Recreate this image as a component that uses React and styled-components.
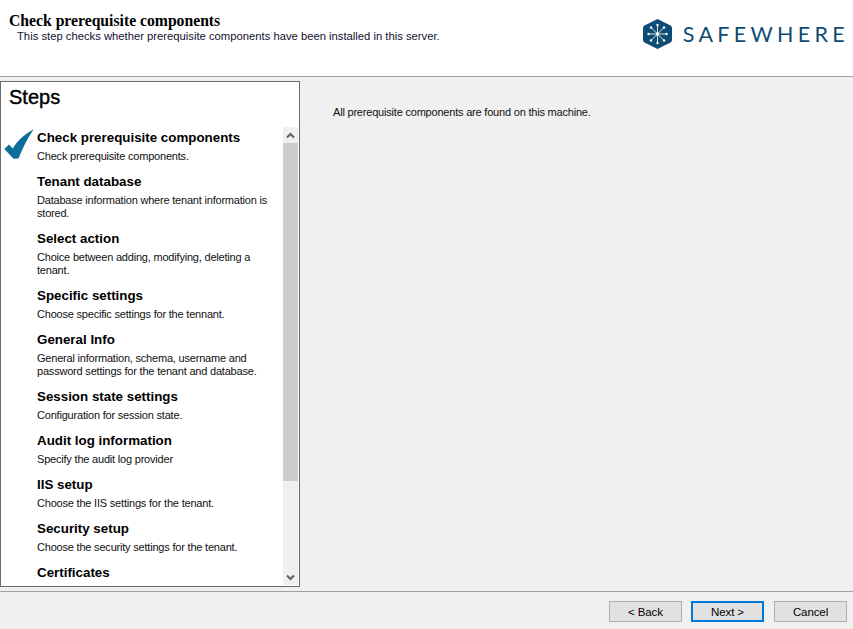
import React from 'react';
import styled, { createGlobalStyle } from 'styled-components';

const GlobalStyle = createGlobalStyle`
  html, body {
    margin: 0;
    padding: 0;
    height: 100%;
    background: #f0f0f0;
  }
  #root {
    height: 100%;
  }
`;

const STEPS = [
  { title: 'Check prerequisite components', desc: 'Check prerequisite components.', done: true },
  { title: 'Tenant database', desc: 'Database information where tenant information is stored.' },
  { title: 'Select action', desc: 'Choice between adding, modifying, deleting a tenant.' },
  { title: 'Specific settings', desc: 'Choose specific settings for the tennant.' },
  { title: 'General Info', desc: 'General information, schema, username and password settings for the tenant and database.' },
  { title: 'Session state settings', desc: 'Configuration for session state.' },
  { title: 'Audit log information', desc: 'Specify the audit log provider' },
  { title: 'IIS setup', desc: 'Choose the IIS settings for the tenant.' },
  { title: 'Security setup', desc: 'Choose the security settings for the tenant.' },
  { title: 'Certificates' },
];

const Wizard = styled.div`
  width: 853px;
  height: 629px;
  display: flex;
  flex-direction: column;
  overflow: hidden;
  background: #f0f0f0;
  font-family: 'Liberation Sans', Arial, sans-serif;
  color: #000;
`;

const Header = styled.header`
  height: 77px;
  flex: none;
  box-sizing: border-box;
  display: flex;
  justify-content: space-between;
  background: #fff;
  border-bottom: 1px solid #a0a0a0;
`;

const HeaderText = styled.div`
  padding: 12px 0 0 9px;
`;

const PageTitle = styled.h1`
  margin: 0;
  font: bold 15.7px/18px 'Liberation Serif', 'Times New Roman', serif;
`;

const PageSubtitle = styled.p`
  margin: 0;
  padding-left: 8px;
  font-size: 11.25px;
  line-height: 13px;
  color: #101030;
`;

const Logo = styled.div`
  display: flex;
  align-items: center;
  gap: 11px;
  padding: 0 8px 8px 0;
`;

const LogoText = styled.span`
  font: 400 21.5px/24px Lato, sans-serif;
  letter-spacing: 4.3px;
  color: #0e4c74;
  margin-right: -4px;
`;

const Main = styled.main`
  flex: 1;
  display: flex;
  min-height: 0;
  padding-top: 4px;
`;

const StepsPanel = styled.aside`
  width: 300px;
  height: 506px;
  flex: none;
  box-sizing: border-box;
  display: flex;
  flex-direction: column;
  background: #fff;
  border: 1px solid #696969;
`;

const StepsHeading = styled.h2`
  margin: 0;
  padding: 3px 0 0 8px;
  height: 45px;
  box-sizing: border-box;
  flex: none;
  font-size: 20px;
  line-height: 24px;
  font-weight: 400;
  -webkit-text-stroke: 0.4px #000;
`;

const StepsBody = styled.div`
  flex: 1;
  min-height: 0;
  display: flex;
`;

const StepList = styled.ol`
  flex: 1;
  min-width: 0;
  margin: 0;
  padding: 2px 0 0;
  list-style: none;
  overflow: hidden;
`;

const StepItem = styled.li`
  display: grid;
  grid-template-columns: 36px 1fr;
  padding-bottom: 10px;
`;

const CheckCell = styled.div`
  position: relative;
`;

const CheckMark = styled.svg`
  position: absolute;
  left: 3px;
  top: 0;
`;

const StepTitle = styled.div`
  height: 21px;
  font-size: 13.35px;
  line-height: 18px;
  font-weight: 700;
`;

const StepDesc = styled.div`
  width: 236px;
  font-size: 11px;
  letter-spacing: -0.2px;
  line-height: 13px;
  color: #101010;
`;

const Scrollbar = styled.div`
  width: 15px;
  flex: none;
  margin-right: 1px;
  margin-bottom: 1px;
  display: flex;
  flex-direction: column;
  background: #f0f0f0;
`;

const ScrollArrow = styled.div`
  height: 16px;
  flex: none;
  display: flex;
  align-items: center;
  justify-content: center;
`;

const ScrollTrack = styled.div`
  flex: 1;
  min-height: 0;
`;

const ScrollThumb = styled.div`
  height: 338px;
  background: #cdcdcd;
`;

const Content = styled.section`
  flex: 1;
  padding: 24px 0 0 33px;
  font-size: 11px;
  letter-spacing: -0.2px;
  line-height: 14px;
  color: #101010;
`;

const Footer = styled.footer`
  height: 38px;
  flex: none;
  box-sizing: border-box;
  display: flex;
  justify-content: flex-end;
  align-items: flex-start;
  gap: 9px;
  padding: 9px 6px 0 0;
  border-top: 1px solid #a0a0a0;
`;

const Button = styled.button`
  width: 73px;
  height: 21px;
  margin: 0 ${(props) => (props.$focused ? '1px' : '0')} 0 0;
  padding: 0;
  box-sizing: border-box;
  background: #e1e1e1;
  border: ${(props) => (props.$focused ? '2px solid #0078d7' : '1px solid #adadad')};
  font-family: 'Liberation Sans', Arial, sans-serif;
  font-size: 11.5px;
  letter-spacing: -0.1px;
  color: #000;
`;

const HexLogo = () => (
  <svg width="29" height="30" viewBox="0 0 29 30" aria-hidden="true">
    <path
      d="M14.5 0 L27.5 6.5 Q29 7.3 29 9 V21 Q29 22.7 27.5 23.5 L14.5 30 L1.5 23.5 Q0 22.7 0 21 V9 Q0 7.3 1.5 6.5 Z"
      fill="#0e4c74"
    />
    <g stroke="#d5e2ea" strokeWidth="1" strokeLinecap="round">
      <path d="M14.5 15 V6 M14.5 15 V24 M14.5 15 H23.5 M14.5 15 H5.5" />
      <path d="M14.5 15 L21 8.5 M14.5 15 L8 8.5 M14.5 15 L21 21.5 M14.5 15 L8 21.5" />
    </g>
    <g fill="#fff">
      <circle cx="14.5" cy="15" r="1.7" />
      <circle cx="14.5" cy="6" r="1.2" />
      <circle cx="14.5" cy="24" r="1.2" />
      <circle cx="23.5" cy="15" r="1.2" />
      <circle cx="5.5" cy="15" r="1.2" />
      <circle cx="21" cy="8.5" r="1.2" />
      <circle cx="8" cy="8.5" r="1.2" />
      <circle cx="21" cy="21.5" r="1.2" />
      <circle cx="8" cy="21.5" r="1.2" />
    </g>
  </svg>
);

const Chevron = ({ down }) => (
  <svg width="9" height="7" viewBox="0 0 9 7" aria-hidden="true">
    <path
      d={down ? 'M1 1.5 L4.5 5 L8 1.5' : 'M1 5.5 L4.5 2 L8 5.5'}
      fill="none"
      stroke="#606060"
      strokeWidth="2"
    />
  </svg>
);

const App = () => {
  return (
    <Wizard>
      <GlobalStyle />
      <Header>
        <HeaderText>
          <PageTitle>Check prerequisite components</PageTitle>
          <PageSubtitle>This step checks whether prerequisite components have been installed in this server.</PageSubtitle>
        </HeaderText>
        <Logo>
          <HexLogo />
          <LogoText>SAFEWHERE</LogoText>
        </Logo>
      </Header>
      <Main>
        <StepsPanel>
          <StepsHeading>Steps</StepsHeading>
          <StepsBody>
            <StepList>
              {STEPS.map((step) => (
                <StepItem key={step.title}>
                  <CheckCell>
                    {step.done && (
                      <CheckMark width="30" height="30" viewBox="0 0 30 30" aria-hidden="true">
                        <path
                          d="M0.3 20 L5 15.5 L8.7 19.5 Q16 7.5 29.7 0.3 Q21 13 14.5 29.5 L9.5 29.7 Z"
                          fill="#0b6e9b"
                        />
                      </CheckMark>
                    )}
                  </CheckCell>
                  <div>
                    <StepTitle>{step.title}</StepTitle>
                    {step.desc && <StepDesc>{step.desc}</StepDesc>}
                  </div>
                </StepItem>
              ))}
            </StepList>
            <Scrollbar>
              <ScrollArrow>
                <Chevron />
              </ScrollArrow>
              <ScrollTrack>
                <ScrollThumb />
              </ScrollTrack>
              <ScrollArrow>
                <Chevron down />
              </ScrollArrow>
            </Scrollbar>
          </StepsBody>
        </StepsPanel>
        <Content>All prerequisite components are found on this machine.</Content>
      </Main>
      <Footer>
        <Button>&lt; Back</Button>
        <Button $focused>Next &gt;</Button>
        <Button>Cancel</Button>
      </Footer>
    </Wizard>
  );
};

export default App;
